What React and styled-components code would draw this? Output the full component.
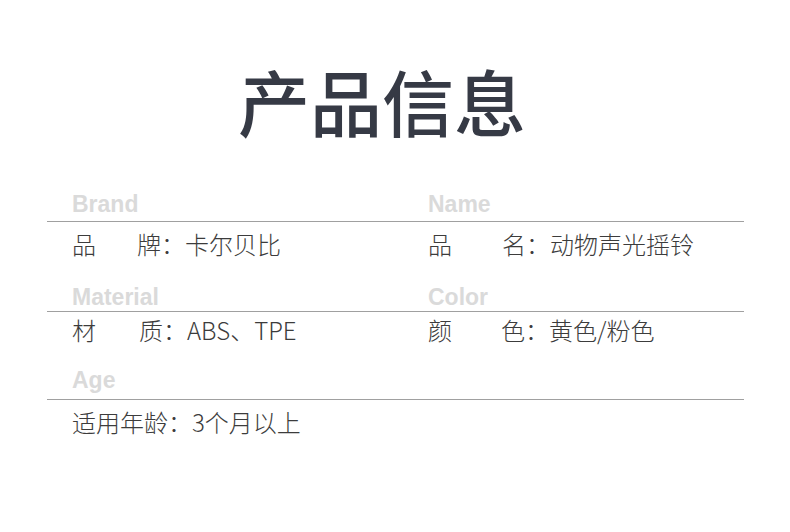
import React from "react"
import styled, { createGlobalStyle } from "styled-components"

const GlobalStyle = createGlobalStyle`
  html, body {
    margin: 0;
    padding: 0;
    background: #ffffff;
  }
  body {
    font-family: "Noto Sans CJK SC", "Noto Sans", sans-serif;
  }
`

const Page = styled.div`
  width: 790px;
  height: 532px;
  padding-top: 64px;
  box-sizing: border-box;
  overflow: hidden;
`

const Title = styled.h1`
  margin: 0;
  padding-right: 26px;
  text-align: center;
  font-family: "Noto Sans CJK SC", sans-serif;
  font-size: 72px;
  line-height: 72px;
  font-weight: 500;
  color: #363a45;
  letter-spacing: 0;
`

const Table = styled.div`
  margin: 0 46px 0 47px;
  padding-top: ${(p) => p.top}px;
`

const Head = styled.div`
  display: grid;
  grid-template-columns: 356px 1fr;
  padding: 0 0 ${(p) => p.padBottom}px 25px;
  margin-top: ${(p) => p.gap}px;
  border-bottom: 1px solid #a0a0a0;
`

const Label = styled.span`
  font-family: "Liberation Sans", Arial, sans-serif;
  font-weight: 700;
  font-size: 23px;
  line-height: 24px;
  color: #dadada;
`

const Body = styled.div`
  display: grid;
  grid-template-columns: 356px 1fr;
  padding: ${(p) => p.top}px 0 0 25px;
`

const Value = styled.div`
  display: flex;
  align-items: baseline;
  font-size: 24px;
  line-height: 24px;
  font-weight: 300;
  color: #3c3c3c;
  white-space: nowrap;
`

const KeyHead = styled.span`
  margin-right: ${(p) => p.spread}px;
`

const Field = ({ k, spread, children }) => (
  <Value>
    {k.length === 2 ? (
      <>
        <KeyHead spread={spread}>{k[0]}</KeyHead>
        <span>{k[1]}：</span>
      </>
    ) : (
      <span>{k}：</span>
    )}
    <span>{children}</span>
  </Value>
)

const rows = [
  {
    gap: 0,
    padBottom: 5,
    top: 10,
    labels: ["Brand", "Name"],
    fields: [
      { k: "品牌", spread: 41, v: "卡尔贝比" },
      { k: "品名", spread: 50, v: "动物声光摇铃" },
    ],
  },
  {
    gap: 29,
    padBottom: 2,
    top: 6,
    labels: ["Material", "Color"],
    fields: [
      { k: "材质", spread: 43, v: "ABS、TPE" },
      { k: "颜色", spread: 49, v: "黄色/粉色" },
    ],
  },
  {
    gap: 26,
    padBottom: 7,
    top: 10,
    labels: ["Age"],
    fields: [{ k: "适用年龄", v: "3个月以上" }],
  },
]

const App = () => (
  <Page>
    <GlobalStyle />
    <Title>产品信息</Title>
    <Table top={56}>
      {rows.map((row, i) => (
        <section key={i}>
          <Head gap={row.gap} padBottom={row.padBottom}>
            {row.labels.map((l) => (
              <Label key={l}>{l}</Label>
            ))}
          </Head>
          <Body top={row.top}>
            {row.fields.map((f) => (
              <Field key={f.k} k={f.k} spread={f.spread}>
                {f.v}
              </Field>
            ))}
          </Body>
        </section>
      ))}
    </Table>
  </Page>
)

export default App
